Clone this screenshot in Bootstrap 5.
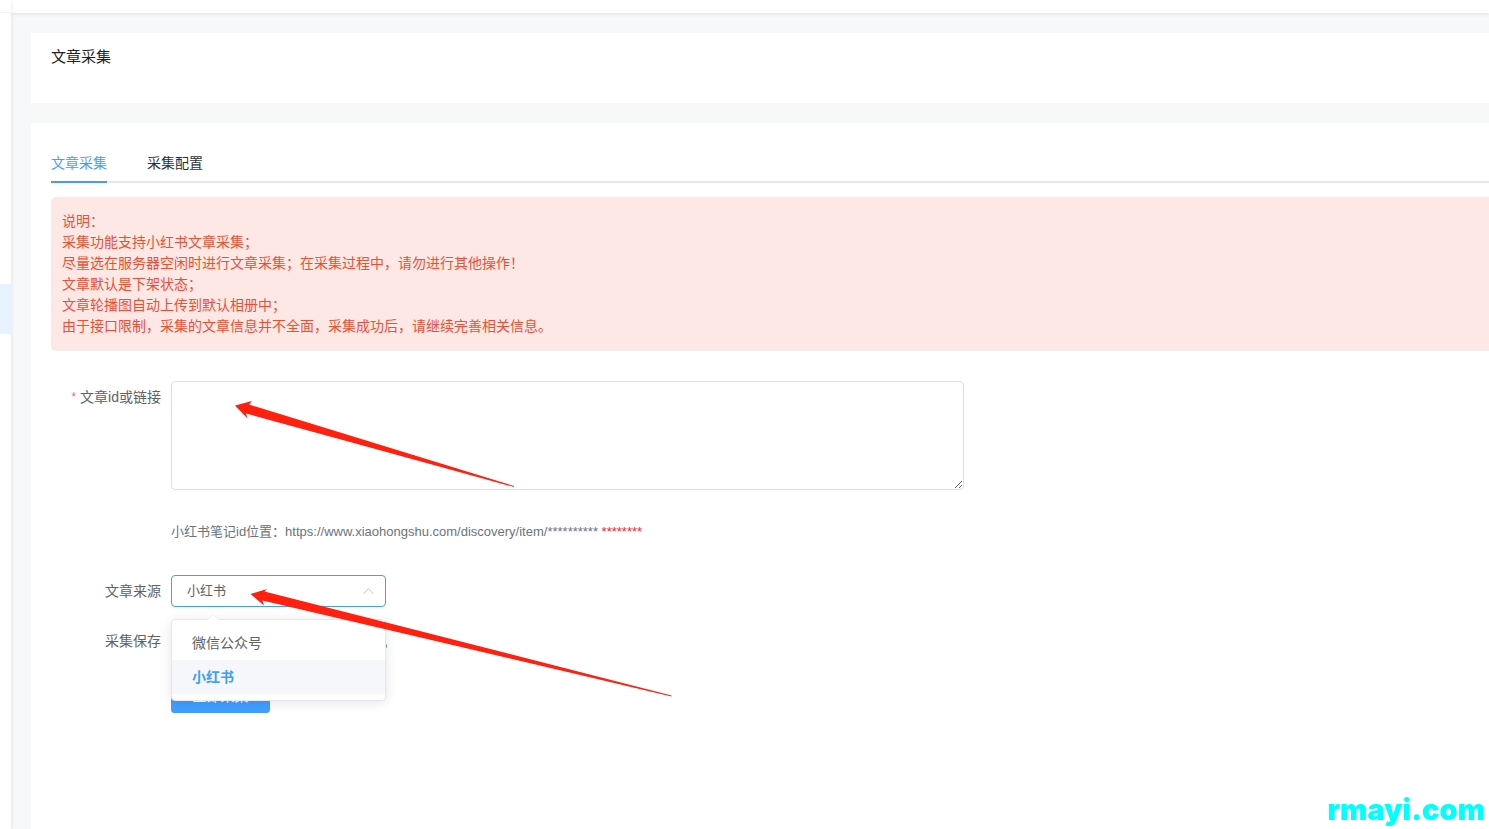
<!DOCTYPE html>
<html lang="zh-CN">
<head>
<meta charset="utf-8">
<meta name="viewport" content="width=device-width, initial-scale=1">
<title>文章采集</title>
<link href="https://cdn.jsdelivr.net/npm/bootstrap@5.3.0/dist/css/bootstrap.min.css" rel="stylesheet">
<script src="https://cdn.jsdelivr.net/npm/bootstrap@5.3.0/dist/js/bootstrap.bundle.min.js" defer></script>
<style>
  body { font-family: "Liberation Sans", "Noto Sans CJK SC", sans-serif; font-size: 14px; line-height: 20px; color: #606266; background: #f7f8fa; overflow: hidden; }
  .side-edge { width: 11px; box-shadow: 0 0 4px rgba(0,21,41,.1); }
  .side-top { height: 13px; border-bottom: 1px solid #f2f3f5; }
  .side-active { height: 50px; margin-top: 271px; background: #e6f3ff; }
  .top-edge { height: 13px; box-shadow: 0 1px 4px rgba(0,21,41,.1); }
  .page-body { padding: 20px 0 0 20px; gap: 20px; }
  .title-panel { padding: 14px 20px 36px; }
  .title-panel h1 { font-size: 15px; line-height: 20px; color: #222; font-weight: 400; }
  .main-panel { padding: 20px 0 0 20px; }
  .tab-row { gap: 40px; height: 40px; border-bottom: 2px solid #e4e7ed; margin-bottom: 14px; }
  .tab-row .nav-link { padding: 0; height: 40px; line-height: 40px; color: #303133; border-bottom: 2px solid transparent; }
  .tab-row .nav-link.active { color: #409eff; border-color: #409eff; }
  .note-box { padding: 13px 10px; line-height: 21px; color: #ed4e35; background: #fde8e5; border: 1px solid #ebeef0; border-right: 0; border-radius: 5px 0 0 5px; margin-bottom: 30px; }
  .form-line { display: flex; }
  .form-line > .field-label { width: 120px; padding-right: 10px; text-align: right; line-height: 32px; flex: none; }
  .star { color: #f56c6c; font-size: 12px; vertical-align: 1px; }
  .link-wrap { flex: 1 1 auto; max-width: 793px; }
  .link-wrap textarea { height: 109px; border: 1px solid #dcdfe6; border-radius: 4px; padding: 5px 15px; font-size: 14px; display: block; }
  .hint { margin: 32px 0 33px 120px; font-size: 13px; color: #6b747b; }
  .hint b { font-weight: 400; color: #f5222d; }
  .pick { width: 215px; }
  .pick select { width: 100%; height: 32px; border: 1px solid #409eff; border-radius: 4px; padding: 0 30px 0 15px; font-size: 13px; color: #606266; background: #fff; appearance: none; }
  .pick .caret { right: 12px; top: 12px; }
  .pick-menu { top: 44px; left: 0; width: 100%; padding: 6px 0; background: #fff; border: 1px solid #e4e7ed; border-radius: 4px; box-shadow: 0 2px 12px rgba(0,0,0,.1); z-index: 5; }
  .pick-menu .opt { height: 34px; line-height: 34px; padding: 0 20px; }
  .pick-menu .opt.on { color: #409eff; font-weight: 700; background: #f5f7fa; }
  .pick-menu .tip { top: -6px; left: 35px; }
  .pointer { z-index: 10; pointer-events: none; overflow: visible; }
  .pointer-a { left: 63px; top: 19px; }
  .pointer-b { left: 79px; top: 13px; }
  .save-line { margin: 18px 0 24px; }
  .save-text { width: 217px; line-height: 32px; text-align: right; color: #2b6cb0; }
  .go-btn { margin-left: 120px; height: 32px; width: 99px; padding: 0 0 3px; font-size: 14px; color: #fff; background: #409eff; border: 1px solid #409eff; border-radius: 3px; }
  .site-mark { right: 4px; bottom: 4px; font: 900 29px/30px Inter, sans-serif; color: #0ff; }
</style>
</head>
<body>
<div class="d-flex vh-100">
  <aside class="side-edge bg-white flex-shrink-0 position-relative z-1">
    <div class="side-top"></div>
    <div class="side-active"></div>
  </aside>
  <div class="flex-grow-1 d-flex flex-column">
    <header class="top-edge bg-white"></header>
    <main class="page-body flex-grow-1 d-flex flex-column">
      <section class="title-panel bg-white"><h1 class="m-0">文章采集</h1></section>
      <section class="main-panel bg-white flex-grow-1">
        <nav class="nav tab-row">
          <a class="nav-link active" href="#collect">文章采集</a>
          <a class="nav-link" href="#config">采集配置</a>
        </nav>
        <div class="note-box">
          说明：<br>采集功能支持小红书文章采集；<br>尽量选在服务器空闲时进行文章采集；在采集过程中，请勿进行其他操作！<br>文章默认是下架状态；<br>文章轮播图自动上传到默认相册中；<br>由于接口限制，采集的文章信息并不全面，采集成功后，请继续完善相关信息。
        </div>
        <form>
          <div class="form-line">
            <label class="field-label" for="link"><span class="star">*</span> 文章id或链接</label>
            <div class="link-wrap position-relative">
              <textarea id="link" class="w-100"></textarea>
              <svg class="pointer pointer-a position-absolute" width="281" height="88" viewBox="0 0 281 88"><path fill="#ff2010" d="M1 5.500 18 1 15 4.500 116 35.500 280 86v1L116 42 12 13.500 13.500 18.500Z"/></svg>
            </div>
          </div>
          <p class="hint">小红书笔记id位置：https://www.xiaohongshu.com/discovery/item/********** <b>********</b></p>
          <div class="form-line">
            <label class="field-label" for="source">文章来源</label>
            <div class="pick position-relative">
              <select id="source"><option>微信公众号</option><option selected>小红书</option></select>
              <svg class="caret position-absolute" width="11" height="8" viewBox="0 0 11 8" fill="none" stroke="#c0c4cc"><path d="M.5 7 5.500 1.500 10.500 7"/></svg>
              <div class="pick-menu position-absolute">
                <svg class="tip position-absolute" width="12" height="7" viewBox="0 0 12 7"><path d="M0 6 6 0l6 6v1H0Z" fill="#fff"/><path d="M0 6 6 .5 12 6" fill="none" stroke="#ebeef5"/></svg>
                <div class="opt">微信公众号</div>
                <div class="opt on">小红书</div>
              </div>
              <svg class="pointer pointer-b position-absolute" width="422" height="109" viewBox="0 0 422 109"><path fill="#ff2010" d="M.5 6 17 1 14.500 3.500 160 40.500 421.500 107.500v1L160 47 12.500 12.500 14 17.500Z"/></svg>
            </div>
          </div>
          <div class="form-line save-line">
            <span class="field-label">采集保存</span>
            <span class="save-text">,</span>
          </div>
          <button type="button" class="go-btn">立即采集</button>
        </form>
      </section>
    </main>
  </div>
</div>
<div class="site-mark position-fixed">rmayi.com</div>
</body>
</html>
